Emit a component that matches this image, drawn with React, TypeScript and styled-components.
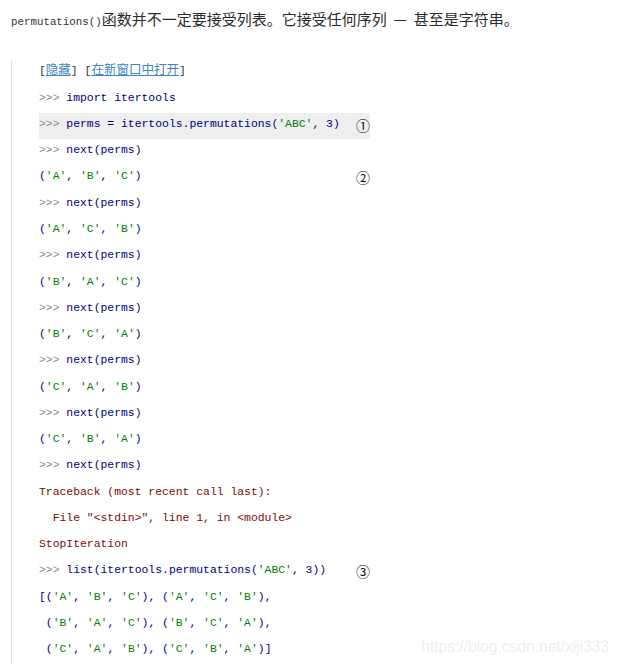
import React from "react";
import styled, { createGlobalStyle } from "styled-components";

const GlobalStyle = createGlobalStyle`
  html, body { margin: 0; padding: 0; background: #ffffff; }
`;

const Page = styled.div`
  position: relative;
  height: 664px;
  overflow: hidden;
  padding: 10px 0 0 11px;
  box-sizing: border-box;
`;

const Intro = styled.p`
  margin: 0;
  font-family: "Noto Sans CJK SC", "Noto Sans", sans-serif;
  font-size: 15px;
  line-height: 18px;
  color: #2b2b2b;
  word-spacing: 3.5px;
`;

const InlineCode = styled.code`
  font-family: "Liberation Mono", monospace;
  font-size: 10.8px;
  color: #333;
  word-spacing: 0;
`;

const Block = styled.div`
  margin-top: 29px;
  border-left: 1px solid #dedede;
  padding-left: 27px;
  padding-top: 0;
  height: 620px;
  box-sizing: border-box;
  display: flex;
  flex-direction: column;
`;

const Row = styled.div<{ $hl?: boolean }>`
  display: flex;
  align-items: center;
  box-sizing: border-box;
  height: 26.27px;
  line-height: 1;
  flex: none;
  padding-bottom: 2px;
  width: ${(p) => (p.$hl ? "331px" : "auto")};
  background: ${(p) => (p.$hl ? "#eeeeee" : "transparent")};
`;

const HideRow = styled(Row)`
  padding-bottom: 8px;
`;

const Code = styled.span`
  width: 317px;
  flex: none;
  white-space: pre;
  font-family: "Liberation Mono", monospace;
  font-size: 11.4px;
`;

const Tok = styled.span<{ $k: "p" | "n" | "s" | "e" }>`
  color: ${(p) =>
    p.$k === "p" ? "#8a8a8a" : p.$k === "s" ? "#008000" : p.$k === "e" ? "#7a0a0a" : "#000080"};
`;

const Marker = styled.span`
  font-family: "Noto Sans CJK SC", sans-serif;
  font-size: 14px;
  color: #111;
  line-height: 1;
`;

const Bracket = styled.span`
  font-family: "Liberation Mono", monospace;
  font-size: 11.4px;
  color: #333;
`;

const Link = styled.a`
  font-family: "Noto Sans CJK SC", sans-serif;
  font-size: 12.5px;
  color: #4183c4;
  text-decoration: underline;
`;

const HideLine = styled.span`
  white-space: pre;
  line-height: 1;
`;

const Watermark = styled.div`
  position: absolute;
  right: 9px;
  bottom: 8px;
  font-family: "Liberation Sans", Arial, sans-serif;
  font-size: 15.8px;
  color: #efefef;
  letter-spacing: -0.1px;
`;

function tokens(line: string, kind: "code" | "err") {
  if (kind === "err") return [<Tok key="e" $k="e">{line}</Tok>];
  const out: React.ReactNode[] = [];
  let rest = line;
  if (rest.startsWith(">>> ")) {
    out.push(<Tok key="p" $k="p">{">>> "}</Tok>);
    rest = rest.slice(4);
  }
  rest.split(/('[^']*')/).forEach((part, i) => {
    if (!part) return;
    out.push(
      <Tok key={i} $k={part.startsWith("'") ? "s" : "n"}>
        {part}
      </Tok>
    );
  });
  return out;
}

type Line = { text: string; kind?: "code" | "err"; mark?: string; hl?: boolean };

const lines: Line[] = [
  { text: ">>> import itertools" },
  { text: ">>> perms = itertools.permutations('ABC', 3)", mark: "①", hl: true },
  { text: ">>> next(perms)" },
  { text: "('A', 'B', 'C')", mark: "②" },
  { text: ">>> next(perms)" },
  { text: "('A', 'C', 'B')" },
  { text: ">>> next(perms)" },
  { text: "('B', 'A', 'C')" },
  { text: ">>> next(perms)" },
  { text: "('B', 'C', 'A')" },
  { text: ">>> next(perms)" },
  { text: "('C', 'A', 'B')" },
  { text: ">>> next(perms)" },
  { text: "('C', 'B', 'A')" },
  { text: ">>> next(perms)" },
  { text: "Traceback (most recent call last):", kind: "err" },
  { text: '  File "<stdin>", line 1, in <module>', kind: "err" },
  { text: "StopIteration", kind: "err" },
  { text: ">>> list(itertools.permutations('ABC', 3))", mark: "③" },
  { text: "[('A', 'B', 'C'), ('A', 'C', 'B')," },
  { text: " ('B', 'A', 'C'), ('B', 'C', 'A')," },
  { text: " ('C', 'A', 'B'), ('C', 'B', 'A')]" },
];

export default function App() {
  return (
    <>
      <GlobalStyle />
      <Page>
        <Intro>
          <InlineCode>permutations()</InlineCode>函数并不一定要接受列表。它接受任何序列 — 甚至是字符串。
        </Intro>
        <Block>
          <HideRow>
            <HideLine>
              <Bracket>[</Bracket>
              <Link href="#">隐藏</Link>
              <Bracket>] [</Bracket>
              <Link href="#">在新窗口中打开</Link>
              <Bracket>]</Bracket>
            </HideLine>
          </HideRow>
          {lines.map((l, i) => (
            <Row key={i} $hl={l.hl}>
              <Code>{tokens(l.text, l.kind ?? "code")}</Code>
              {l.mark && <Marker>{l.mark}</Marker>}
            </Row>
          ))}
        </Block>
        <Watermark>https://blog.csdn.net/xiji333</Watermark>
      </Page>
    </>
  );
}
